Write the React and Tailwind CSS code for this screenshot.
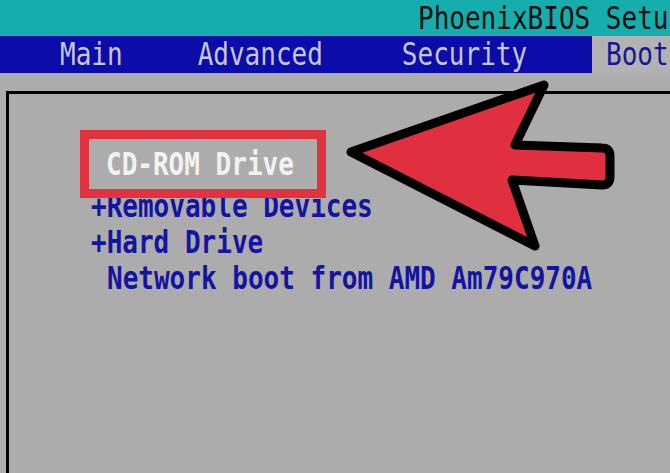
export default function App() {
  const mono = { fontFamily: '"DejaVu Sans Mono", "Liberation Mono", monospace' };

  return (
    <div
      className="relative w-[670px] h-[473px] overflow-hidden bg-[#acacac] flex flex-col text-[26px]"
      style={mono}
    >
      {/* title bar */}
      <div className="h-[36px] bg-[#16adad] pl-[418px] whitespace-nowrap leading-[36px] text-[#111]">
        <span className="inline-block scale-y-[1.2]">PhoenixBIOS Setu</span>
      </div>

      {/* menu bar */}
      <div className="h-[37px] flex leading-[37px] whitespace-nowrap">
        <div className="w-[592px] bg-[#0c0ca8] text-[#c6c6dc] flex pl-[60px]">
          <span className="inline-block scale-y-[1.2]">Main</span>
          <span className="inline-block scale-y-[1.2] ml-[75px]">Advanced</span>
          <span className="inline-block scale-y-[1.2] ml-[79px]">Security</span>
        </div>
        <div className="flex-1 bg-[#b2b2b2] text-[#16169a] pl-[14px]">
          <span className="inline-block scale-y-[1.2]">Boot</span>
        </div>
      </div>

      {/* boot list panel */}
      <div className="flex-1 mt-[18px] ml-[6px] border-l-[3px] border-t-[3px] border-black pt-[36px] pl-[71px] whitespace-nowrap font-bold leading-[36px]">
        <div className="relative z-10 w-[246px] h-[68px] border-[9px] border-[#e0323f] pt-[7px] pl-[17px] text-[#f2f2f2]">
          <span className="inline-block scale-y-[1.2]">CD-ROM Drive</span>
        </div>
        <div className="mt-[-10px] ml-[11px] text-[#1414a0]">
          <span className="inline-block scale-y-[1.2]">+Removable Devices</span>
        </div>
        <div className="ml-[11px] text-[#1414a0]">
          <span className="inline-block scale-y-[1.2]">+Hard Drive</span>
        </div>
        <div className="ml-[27px] text-[#1414a0]">
          <span className="inline-block scale-y-[1.2]">Network boot from AMD Am79C970A</span>
        </div>
      </div>

      {/* pointer arrow */}
      <svg className="absolute inset-0 z-20" width="670" height="473" viewBox="0 0 670 473">
        <path
          d="M351 152 L544 85 L515 145 L602 148 Q610 148 610 156 L610 177 Q610 185 602 185 L512 180 L535 246 Z"
          fill="#e0303f"
          stroke="#000"
          strokeWidth="9"
          strokeLinejoin="round"
        />
      </svg>
    </div>
  );
}
